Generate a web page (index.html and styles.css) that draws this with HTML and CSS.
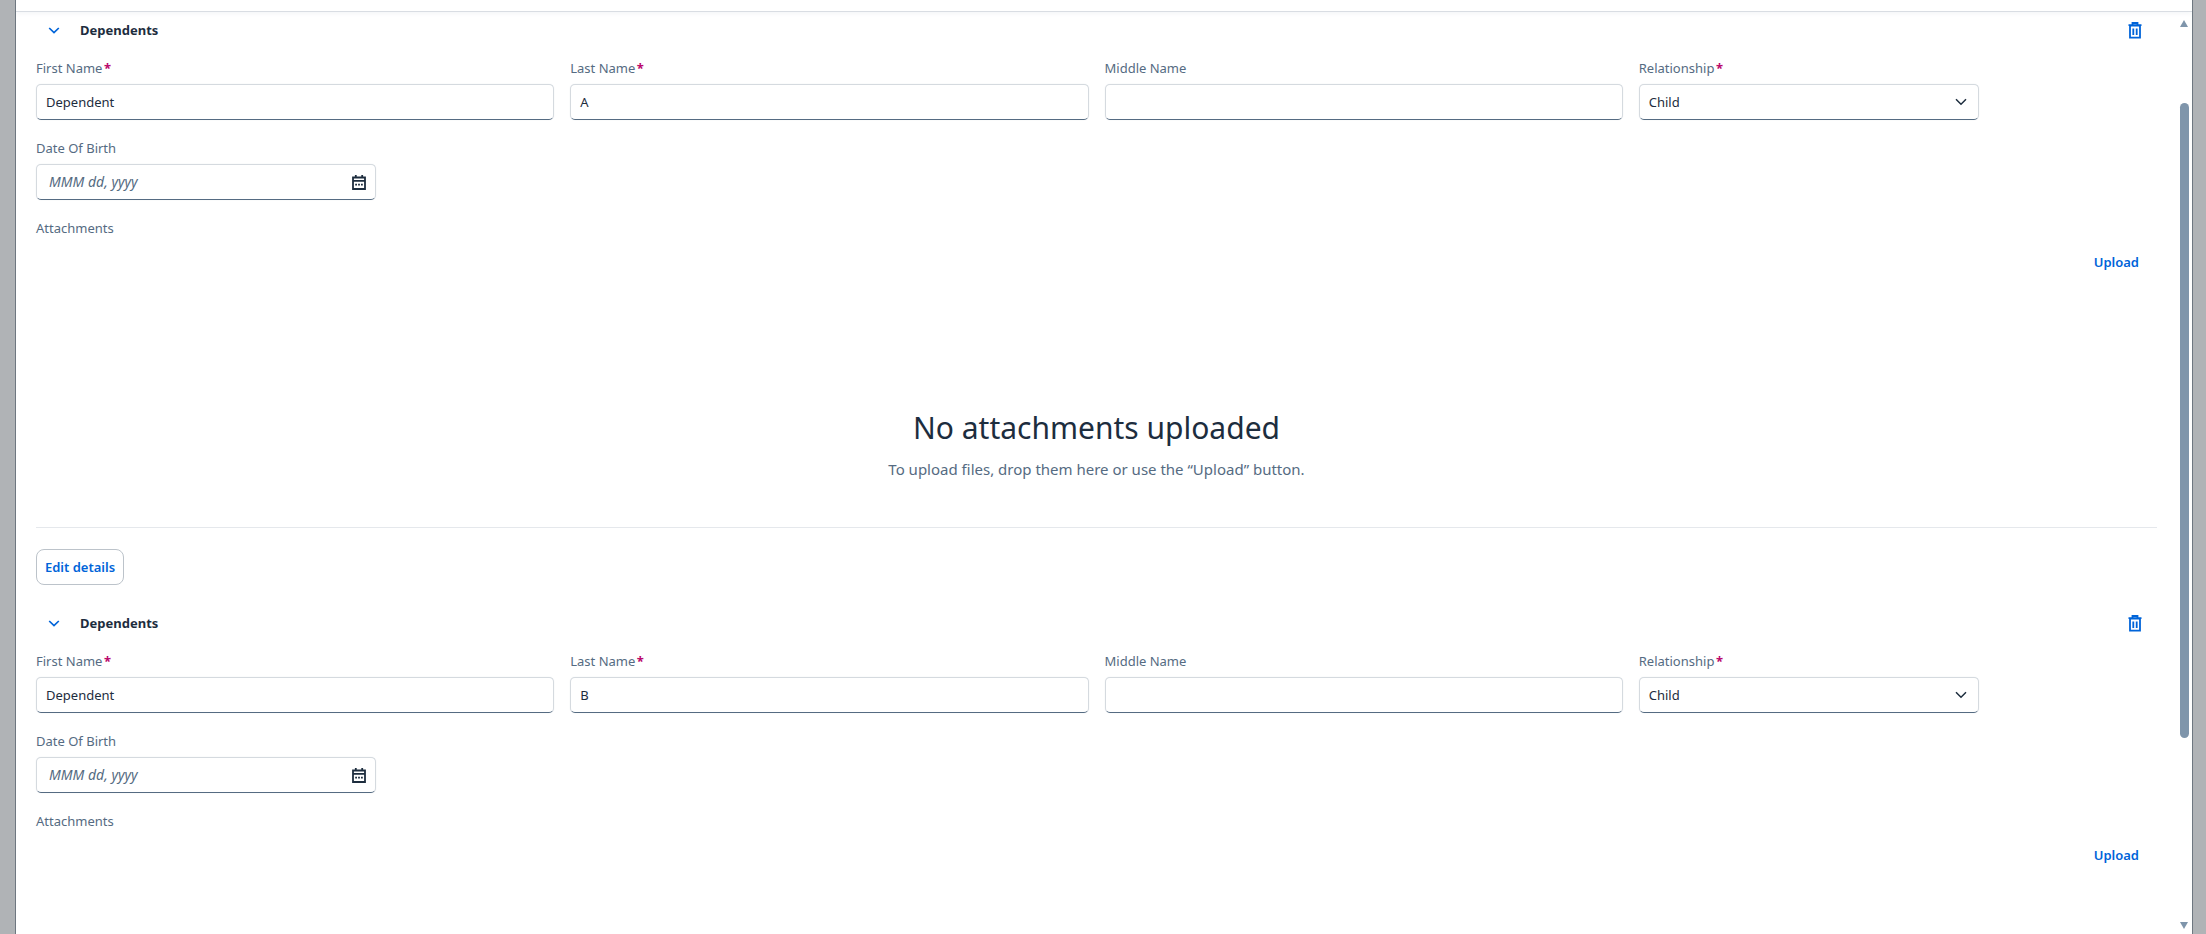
FILE: index.html
```html
<!DOCTYPE html>
<html lang="en">
<head>
<meta charset="utf-8">
<title>Dependents</title>
<link rel="stylesheet" href="styles.css">
</head>
<body>
<div class="shell">
  <div class="edge edge-left"></div>
  <main class="main">
    <div class="topbar"></div>

    <section class="dep">
      <header class="dep-head">
        <svg class="chev" width="12" height="7" viewBox="0 0 12 7"><path d="M1.2 1l4.8 4.6L10.8 1" fill="none" stroke="#0064d9" stroke-width="1.7"/></svg>
        <h2 class="dep-title">Dependents</h2>
        <svg class="trash" width="14" height="17" viewBox="0 0 14 17"><path d="M4.5 3V1h5v2M.5 3.2h13M2 3.5h10v12.2H2zM5.3 6.5v6.5M8.7 6.5v6.5" fill="none" stroke="#0064d9" stroke-width="1.8"/></svg>
      </header>
      <div class="grid">
        <div class="field"><label class="lbl">First Name<span class="req">*</span></label><div class="ctl">Dependent</div></div>
        <div class="field"><label class="lbl">Last Name<span class="req">*</span></label><div class="ctl">A</div></div>
        <div class="field"><label class="lbl">Middle Name</label><div class="ctl"></div></div>
        <div class="field narrow"><label class="lbl">Relationship<span class="req">*</span></label><div class="ctl ctl-icon">Child<svg width="12" height="8" viewBox="0 0 12 8"><path d="M1 1.2l5 5 5-5" fill="none" stroke="#1d2d3e" stroke-width="1.5"/></svg></div></div>
        <div class="field narrow"><label class="lbl">Date Of Birth</label><div class="ctl ctl-icon ctl-date"><span class="ph">MMM dd, yyyy</span><svg width="14" height="16" viewBox="0 0 14 16"><path d="M1 3.5h12v11.5H1zM3.8 1v3.5M10.2 1v3.5M1 6.8h12" fill="none" stroke="#1d2d3e" stroke-width="1.8"/><path d="M3.2 9.8h1.8v1.6H3.2zM6.1 9.8h1.8v1.6H6.1zM9 9.8h1.8v1.6H9z" fill="#1d2d3e"/></svg></div></div>
      </div>
      <div class="lbl att">Attachments</div>
      <div class="upload-row"><a class="upload">Upload</a></div>
      <div class="empty">
        <h3 class="empty-title">No attachments uploaded</h3>
        <p class="empty-sub">To upload files, drop them here or use the “Upload” button.</p>
      </div>
      <hr class="rule">
      <button class="edit">Edit details</button>
    </section>

    <section class="dep">
      <header class="dep-head">
        <svg class="chev" width="12" height="7" viewBox="0 0 12 7"><path d="M1.2 1l4.8 4.6L10.8 1" fill="none" stroke="#0064d9" stroke-width="1.7"/></svg>
        <h2 class="dep-title">Dependents</h2>
        <svg class="trash" width="14" height="17" viewBox="0 0 14 17"><path d="M4.5 3V1h5v2M.5 3.2h13M2 3.5h10v12.2H2zM5.3 6.5v6.5M8.7 6.5v6.5" fill="none" stroke="#0064d9" stroke-width="1.8"/></svg>
      </header>
      <div class="grid">
        <div class="field"><label class="lbl">First Name<span class="req">*</span></label><div class="ctl">Dependent</div></div>
        <div class="field"><label class="lbl">Last Name<span class="req">*</span></label><div class="ctl">B</div></div>
        <div class="field"><label class="lbl">Middle Name</label><div class="ctl"></div></div>
        <div class="field narrow"><label class="lbl">Relationship<span class="req">*</span></label><div class="ctl ctl-icon">Child<svg width="12" height="8" viewBox="0 0 12 8"><path d="M1 1.2l5 5 5-5" fill="none" stroke="#1d2d3e" stroke-width="1.5"/></svg></div></div>
        <div class="field narrow"><label class="lbl">Date Of Birth</label><div class="ctl ctl-icon ctl-date"><span class="ph">MMM dd, yyyy</span><svg width="14" height="16" viewBox="0 0 14 16"><path d="M1 3.5h12v11.5H1zM3.8 1v3.5M10.2 1v3.5M1 6.8h12" fill="none" stroke="#1d2d3e" stroke-width="1.8"/><path d="M3.2 9.8h1.8v1.6H3.2zM6.1 9.8h1.8v1.6H6.1zM9 9.8h1.8v1.6H9z" fill="#1d2d3e"/></svg></div></div>
      </div>
      <div class="lbl att">Attachments</div>
      <div class="upload-row"><a class="upload">Upload</a></div>
    </section>

    <div class="scrollbar">
      <span class="arrow arrow-up"></span>
      <span class="thumb"></span>
      <span class="arrow arrow-down"></span>
    </div>
  </main>
  <div class="edge edge-right"></div>
</div>
</body>
</html>
```

FILE: styles.css
```css
* { box-sizing: border-box; }
html, body { margin: 0; height: 100%; overflow: hidden; background: #fff; }
body { font-family: "Noto Sans", "Open Sans", sans-serif; font-size: 13px; color: #1d2d3e; }

.shell { display: flex; height: 934px; }
.edge { background: #b0b3b6; flex: none; }
.edge-left { width: 16px; border-right: 1px solid #6e7780; }
.edge-right { width: 14px; border-left: 1px solid #6e7780; }

.main { position: relative; flex: 1; min-width: 0; height: 934px; overflow: hidden; background: #fff; padding: 0 35px 0 20px; }
.topbar { height: 12px; margin: 0 -35px 0 -20px; border-bottom: 1px solid #d9dde3; box-shadow: 0 2px 4px rgba(85,107,130,.06); }

.dep-head { display: flex; align-items: center; height: 36px; }
.chev { margin-left: 12px; flex: none; }
.dep-title { margin: 0 0 0 20px; font-size: 13px; font-weight: 700; flex: 1; }
.trash { margin-right: 15px; flex: none; }

.grid { display: grid; grid-template-columns: repeat(4, 1fr); gap: 18px 16px; margin-top: 10px; }
.field { display: flex; flex-direction: column; gap: 6px; min-width: 0; }
.narrow { max-width: 340px; }
.lbl { display: block; height: 20px; line-height: 20px; font-size: 13px; color: #556b82; }
.req { color: #ba066c; font-weight: 700; margin-left: 1.5px; }
.ctl { height: 36px; line-height: 34px; padding: 0 9px; background: #fff; border: 1px solid #d5dadf; border-bottom-color: #556b82; border-radius: 5px; font-size: 13px; box-shadow: 0 0 1px rgba(85,107,130,.2); }
.ctl-icon { display: flex; align-items: center; justify-content: space-between; }
.ctl-icon svg { flex: none; margin-right: 2px; }
.ctl-date { padding-left: 12px; }
.ctl-date svg { margin-right: 0; }
.ph { font-style: italic; font-size: 14px; color: #556b82; }

.att { margin-top: 18px; }
.upload-row { display: flex; justify-content: flex-end; height: 24px; margin-top: 12px; padding-right: 18px; }
.upload { font-size: 13px; font-weight: 600; line-height: 24px; color: #0064d9; }

.empty { display: flex; flex-direction: column; align-items: center; margin-top: 132px; }
.empty-title { margin: 0; height: 44px; line-height: 44px; font-size: 30px; font-weight: 400; }
.empty-sub { margin: 9px 0 0; height: 20px; line-height: 20px; font-size: 15px; color: #556b82; }

.rule { margin: 48px 0 0; border: 0; border-top: 1px solid #e5e8ec; }
.edit { display: block; margin: 21px 0 20px; height: 36px; width: 88px; padding: 0; background: #fff; border: 1px solid #bcc3ca; border-radius: 8px; color: #0064d9; font: 600 13px "Noto Sans", sans-serif; }

.scrollbar { position: absolute; top: 0; right: 3px; bottom: 0; width: 9px; }
.thumb { position: absolute; left: 0; top: 103px; width: 9px; height: 635px; background: #7f95ab; border-radius: 5px; }
.arrow { position: absolute; left: 0; width: 0; height: 0; border-left: 4.5px solid transparent; border-right: 4.5px solid transparent; }
.arrow-up { top: 20px; border-bottom: 7px solid #7f95ab; }
.arrow-down { top: 922px; border-top: 7px solid #7f95ab; }
```
